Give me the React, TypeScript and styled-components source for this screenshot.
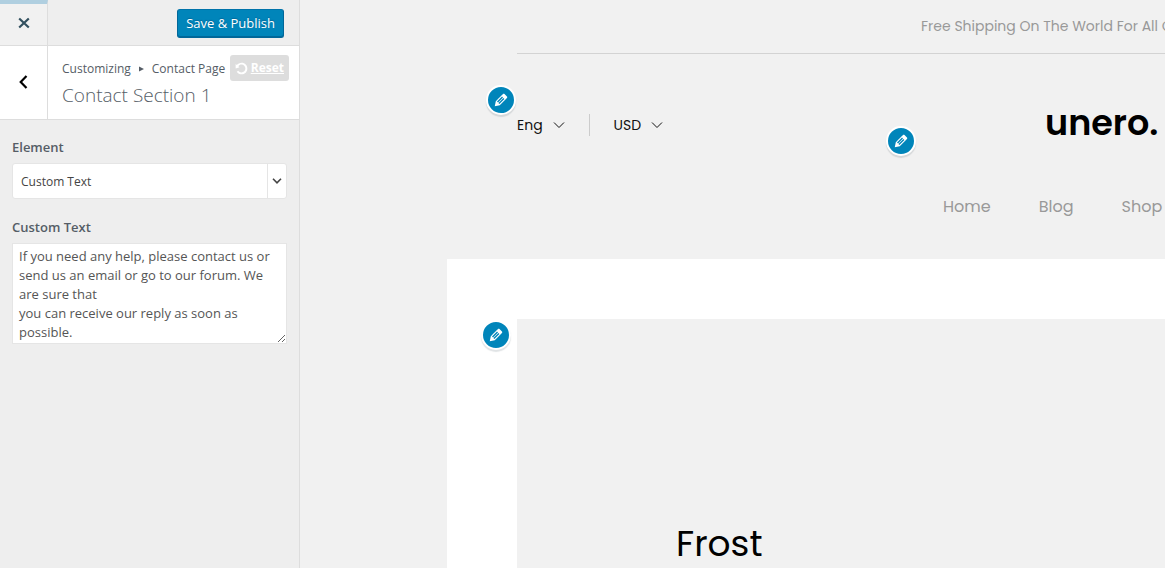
import React from "react";
import styled, { createGlobalStyle } from "styled-components";

const GlobalStyle = createGlobalStyle`
  *, *::before, *::after { box-sizing: border-box; }
  body { margin: 0; background: #f1f1f1; }
  button, select, textarea { font: inherit; }
`;

const uiFont = `"Segoe UI", "Open Sans", sans-serif`;
const shopFont = `Poppins, Inter, sans-serif`;

const Shell = styled.div`
  display: flex;
  height: 100vh;
  overflow: hidden;
`;

const Sidebar = styled.aside`
  flex: 0 0 300px;
  min-width: 0;
  background: #eee;
  border-right: 1px solid #ddd;
  color: #555d66;
  font: 13px/18px ${uiFont};
`;

const ActionBar = styled.header`
  display: flex;
  align-items: center;
  justify-content: space-between;
  height: 46px;
  padding-right: 15px;
  border-bottom: 1px solid #ddd;
`;

const CloseButton = styled.button`
  display: flex;
  align-items: center;
  justify-content: center;
  align-self: stretch;
  width: 48px;
  padding: 0 0 4px;
  border: 0;
  border-top: 4px solid #b0cfe0;
  border-right: 1px solid #ddd;
  background: #f1f1f1;
  color: #32505f;
`;

const SaveButton = styled.button`
  height: 29px;
  margin-top: 1px;
  padding: 0 8px 1px;
  border: 1px solid;
  border-color: #0073aa #006799 #006799;
  border-radius: 3px;
  background: #0085ba;
  box-shadow: inset 0 -1px 0 #006799;
  color: #fff;
  font-size: 13px;
  white-space: nowrap;
  text-shadow: 0 -1px 1px #006799;
`;

const SectionBar = styled.div`
  display: flex;
  height: 74px;
  border-bottom: 1px solid #ddd;
  background: #fff;
`;

const BackButton = styled.button`
  display: flex;
  align-items: center;
  justify-content: center;
  flex: 0 0 48px;
  padding: 0 2px 2px 0;
  border: 0;
  border-right: 1px solid #ddd;
  background: #fff;
  color: #000;
`;

const SectionHeading = styled.div`
  flex: 1;
  min-width: 0;
  padding: 9px 10px 0 14px;
`;

const CrumbRow = styled.div`
  display: flex;
  align-items: center;
  justify-content: space-between;
  height: 26px;
  font-size: 12px;
  white-space: nowrap;
`;

const Crumbs = styled.span`
  display: flex;
  align-items: center;
  gap: 8px;
  padding-top: 2px;
`;

const ResetLink = styled.a`
  display: flex;
  align-items: center;
  gap: 3px;
  height: 26px;
  padding: 0 5px;
  border-radius: 3px;
  background: #ddd;
  color: #fff;
  font-weight: 700;
`;

const SectionTitle = styled.h1`
  margin: 1px 0 0;
  color: #555d66;
  font: 300 19px/26px ${uiFont};
`;

const Controls = styled.form`
  display: flex;
  flex-direction: column;
  padding: 17px 12px;
`;

const FieldLabel = styled.label`
  margin-bottom: 6px;
  font-weight: 600;
  line-height: 20px;
`;

const SelectWrap = styled.div`
  display: grid;
  grid-template-columns: 1fr 19px;
  height: 36px;
  margin-bottom: 18px;
  border: 1px solid #e5e5e5;
  border-radius: 3px;
  background: #fff;
  color: #444;
`;

const Select = styled.select`
  grid-area: 1 / 1 / 2 / 3;
  width: 100%;
  padding: 2px 24px 0 8px;
  border: 0;
  background: transparent;
  color: #444;
  font-size: 12px;
  appearance: none;
`;

const SelectArrow = styled.span`
  grid-area: 1 / 2;
  display: flex;
  align-items: center;
  justify-content: center;
  border-left: 1px solid #e5e5e5;
  pointer-events: none;
`;

const TextArea = styled.textarea`
  height: 101px;
  padding: 3px 6px;
  border: 1px solid #e5e5e5;
  background: #fff;
  color: #555;
  line-height: 19px;
  overflow: hidden;
  resize: vertical;
`;

const Preview = styled.main`
  flex: 1;
  min-width: 0;
  overflow: hidden;
  background: #f1f1f1;
  color: #111;
  font: 14px/20px ${shopFont};
  white-space: nowrap;
`;

const Announcement = styled.p`
  height: 54px;
  margin: 0 0 0 217px;
  padding: 16px 0 0 404px;
  border-bottom: 1px solid #d3d3d3;
  color: #999;
`;

const Masthead = styled.div`
  display: grid;
  grid-template-columns: 528px 1fr;
  align-items: center;
  height: 142px;
  margin-left: 217px;
`;

const Switchers = styled.div`
  position: relative;
  display: flex;
  align-items: center;
`;

const Switcher = styled.button`
  display: flex;
  align-items: center;
  gap: 10px;
  padding: 0;
  border: 0;
  background: none;
  color: #111;
`;

const Divider = styled.span`
  width: 1px;
  height: 22px;
  margin: 0 24px;
  background: #ccc;
`;

const Logo = styled.a`
  padding-bottom: 4px;
  color: #000;
  font-size: 35px;
  font-weight: 600;
  line-height: 48px;
  text-decoration: none;
`;

const Menu = styled.nav`
  position: relative;
  display: flex;
  gap: 48px;
  height: 63px;
  margin-left: 643px;
`;

const MenuLink = styled.a`
  color: #999;
  font-size: 16px;
  line-height: 22px;
  text-decoration: none;
`;

const Content = styled.section`
  position: relative;
  height: 100%;
  margin-left: 147px;
  padding: 60px 0 0 70px;
  background: #fff;
`;

const Banner = styled.div`
  height: 100%;
  padding: 201px 0 0 159px;
  background: #f1f1f1;
`;

const BannerTitle = styled.h2`
  margin: 0;
  color: #000;
  font-size: 36px;
  font-weight: 400;
  line-height: 48px;
`;

const EditBadge = styled.button<{ $left: number; $top: number }>`
  position: absolute;
  left: ${(p) => p.$left}px;
  top: ${(p) => p.$top}px;
  display: flex;
  align-items: center;
  justify-content: center;
  width: 30px;
  height: 30px;
  padding: 0;
  border: 2px solid #fff;
  border-radius: 50%;
  background: #0085ba;
  box-shadow: 0 2px 1px rgba(46, 68, 83, 0.15);
  color: #fff;
`;

const EditShortcut = ({ label, left, top }: { label: string; left: number; top: number }) => (
  <EditBadge type="button" aria-label={label} $left={left} $top={top}>
    <svg width="18" height="18" viewBox="0 0 20 20" fill="currentColor">
      <path d="M13.89 3.39l2.71 2.72c.46.46.42 1.24.03 1.64l-8.01 8.02-5.56 1.16 1.16-5.58s7.6-7.63 7.99-8.03c.39-.39 1.22-.39 1.68.07zm-2.73 2.79l-5.59 5.61 1.11 1.11 5.54-5.65zm-2.97 8.23l5.58-5.6-1.07-1.08-5.59 5.6z" />
    </svg>
  </EditBadge>
);

const Chevron = () => (
  <svg width="12" height="8" viewBox="0 0 12 8" fill="none" stroke="currentColor">
    <path d="M1 1.5l5 5 5-5" />
  </svg>
);

const message = `If you need any help, please contact us or send us an email or go to our forum. We are sure that
you can receive our reply as soon as possible.`;

export default function App() {
  return (
    <>
      <GlobalStyle />
      <Shell>
        <Sidebar>
          <ActionBar>
            <CloseButton type="button" aria-label="Close">
              <svg width="12" height="12" viewBox="0 0 12 12" fill="none" stroke="currentColor" strokeWidth="2.2">
                <path d="M1.2 1.5l9.6 9M10.8 1.5l-9.6 9" />
              </svg>
            </CloseButton>
            <SaveButton type="button">Save &amp; Publish</SaveButton>
          </ActionBar>
          <SectionBar>
            <BackButton type="button" aria-label="Back">
              <svg width="10" height="14" viewBox="0 0 10 14" fill="none" stroke="currentColor" strokeWidth="2.2">
                <path d="M8.5 1L2.7 7l5.8 6" />
              </svg>
            </BackButton>
            <SectionHeading>
              <CrumbRow>
                <Crumbs>
                  Customizing
                  <svg width="5" height="6" viewBox="0 0 5 6" fill="currentColor">
                    <path d="M0 .5L5 3 0 5.5z" />
                  </svg>
                  Contact Page
                </Crumbs>
                <ResetLink href="#reset">
                  <svg width="13" height="13" viewBox="0 0 20 20" fill="currentColor">
                    <path d="M10.25 1.02c5.1 0 8.75 4.04 8.75 9s-3.65 9-8.75 9c-3.2 0-6.02-1.59-7.68-3.99l2.59-1.52c1.1 1.5 2.86 2.51 4.84 2.51 3.3 0 6-2.79 6-6s-2.7-6-6-6c-1.97 0-3.72 1-4.82 2.49L7 8.02l-6 2v-7L2.89 4.6c1.69-2.17 4.36-3.58 7.36-3.58z" />
                  </svg>
                  Reset
                </ResetLink>
              </CrumbRow>
              <SectionTitle>Contact Section 1</SectionTitle>
            </SectionHeading>
          </SectionBar>
          <Controls>
            <FieldLabel htmlFor="element">Element</FieldLabel>
            <SelectWrap>
              <Select id="element" defaultValue="text">
                <option value="text">Custom Text</option>
              </Select>
              <SelectArrow>
                <svg width="10" height="6" viewBox="0 0 10 6" fill="none" stroke="currentColor" strokeWidth="1.6">
                  <path d="M1 .8l4 4 4-4" />
                </svg>
              </SelectArrow>
            </SelectWrap>
            <FieldLabel htmlFor="custom-text">Custom Text</FieldLabel>
            <TextArea id="custom-text" defaultValue={message} spellCheck={false} />
          </Controls>
        </Sidebar>
        <Preview>
          <Announcement>Free Shipping On The World For All Orders Over $100</Announcement>
          <Masthead>
            <Switchers>
              <EditShortcut label="Edit switchers" left={-31} top={-29} />
              <Switcher type="button">Eng <Chevron /></Switcher>
              <Divider />
              <Switcher type="button">USD <Chevron /></Switcher>
            </Switchers>
            <Logo href="#home">unero.</Logo>
          </Masthead>
          <Menu>
            <EditShortcut label="Edit menu" left={-57} top={-70} />
            <MenuLink href="#home">Home</MenuLink>
            <MenuLink href="#blog">Blog</MenuLink>
            <MenuLink href="#shop">Shop</MenuLink>
          </Menu>
          <Content>
            <EditShortcut label="Edit banner" left={34} top={61} />
            <Banner>
              <BannerTitle>Frost</BannerTitle>
            </Banner>
          </Content>
        </Preview>
      </Shell>
    </>
  );
}
